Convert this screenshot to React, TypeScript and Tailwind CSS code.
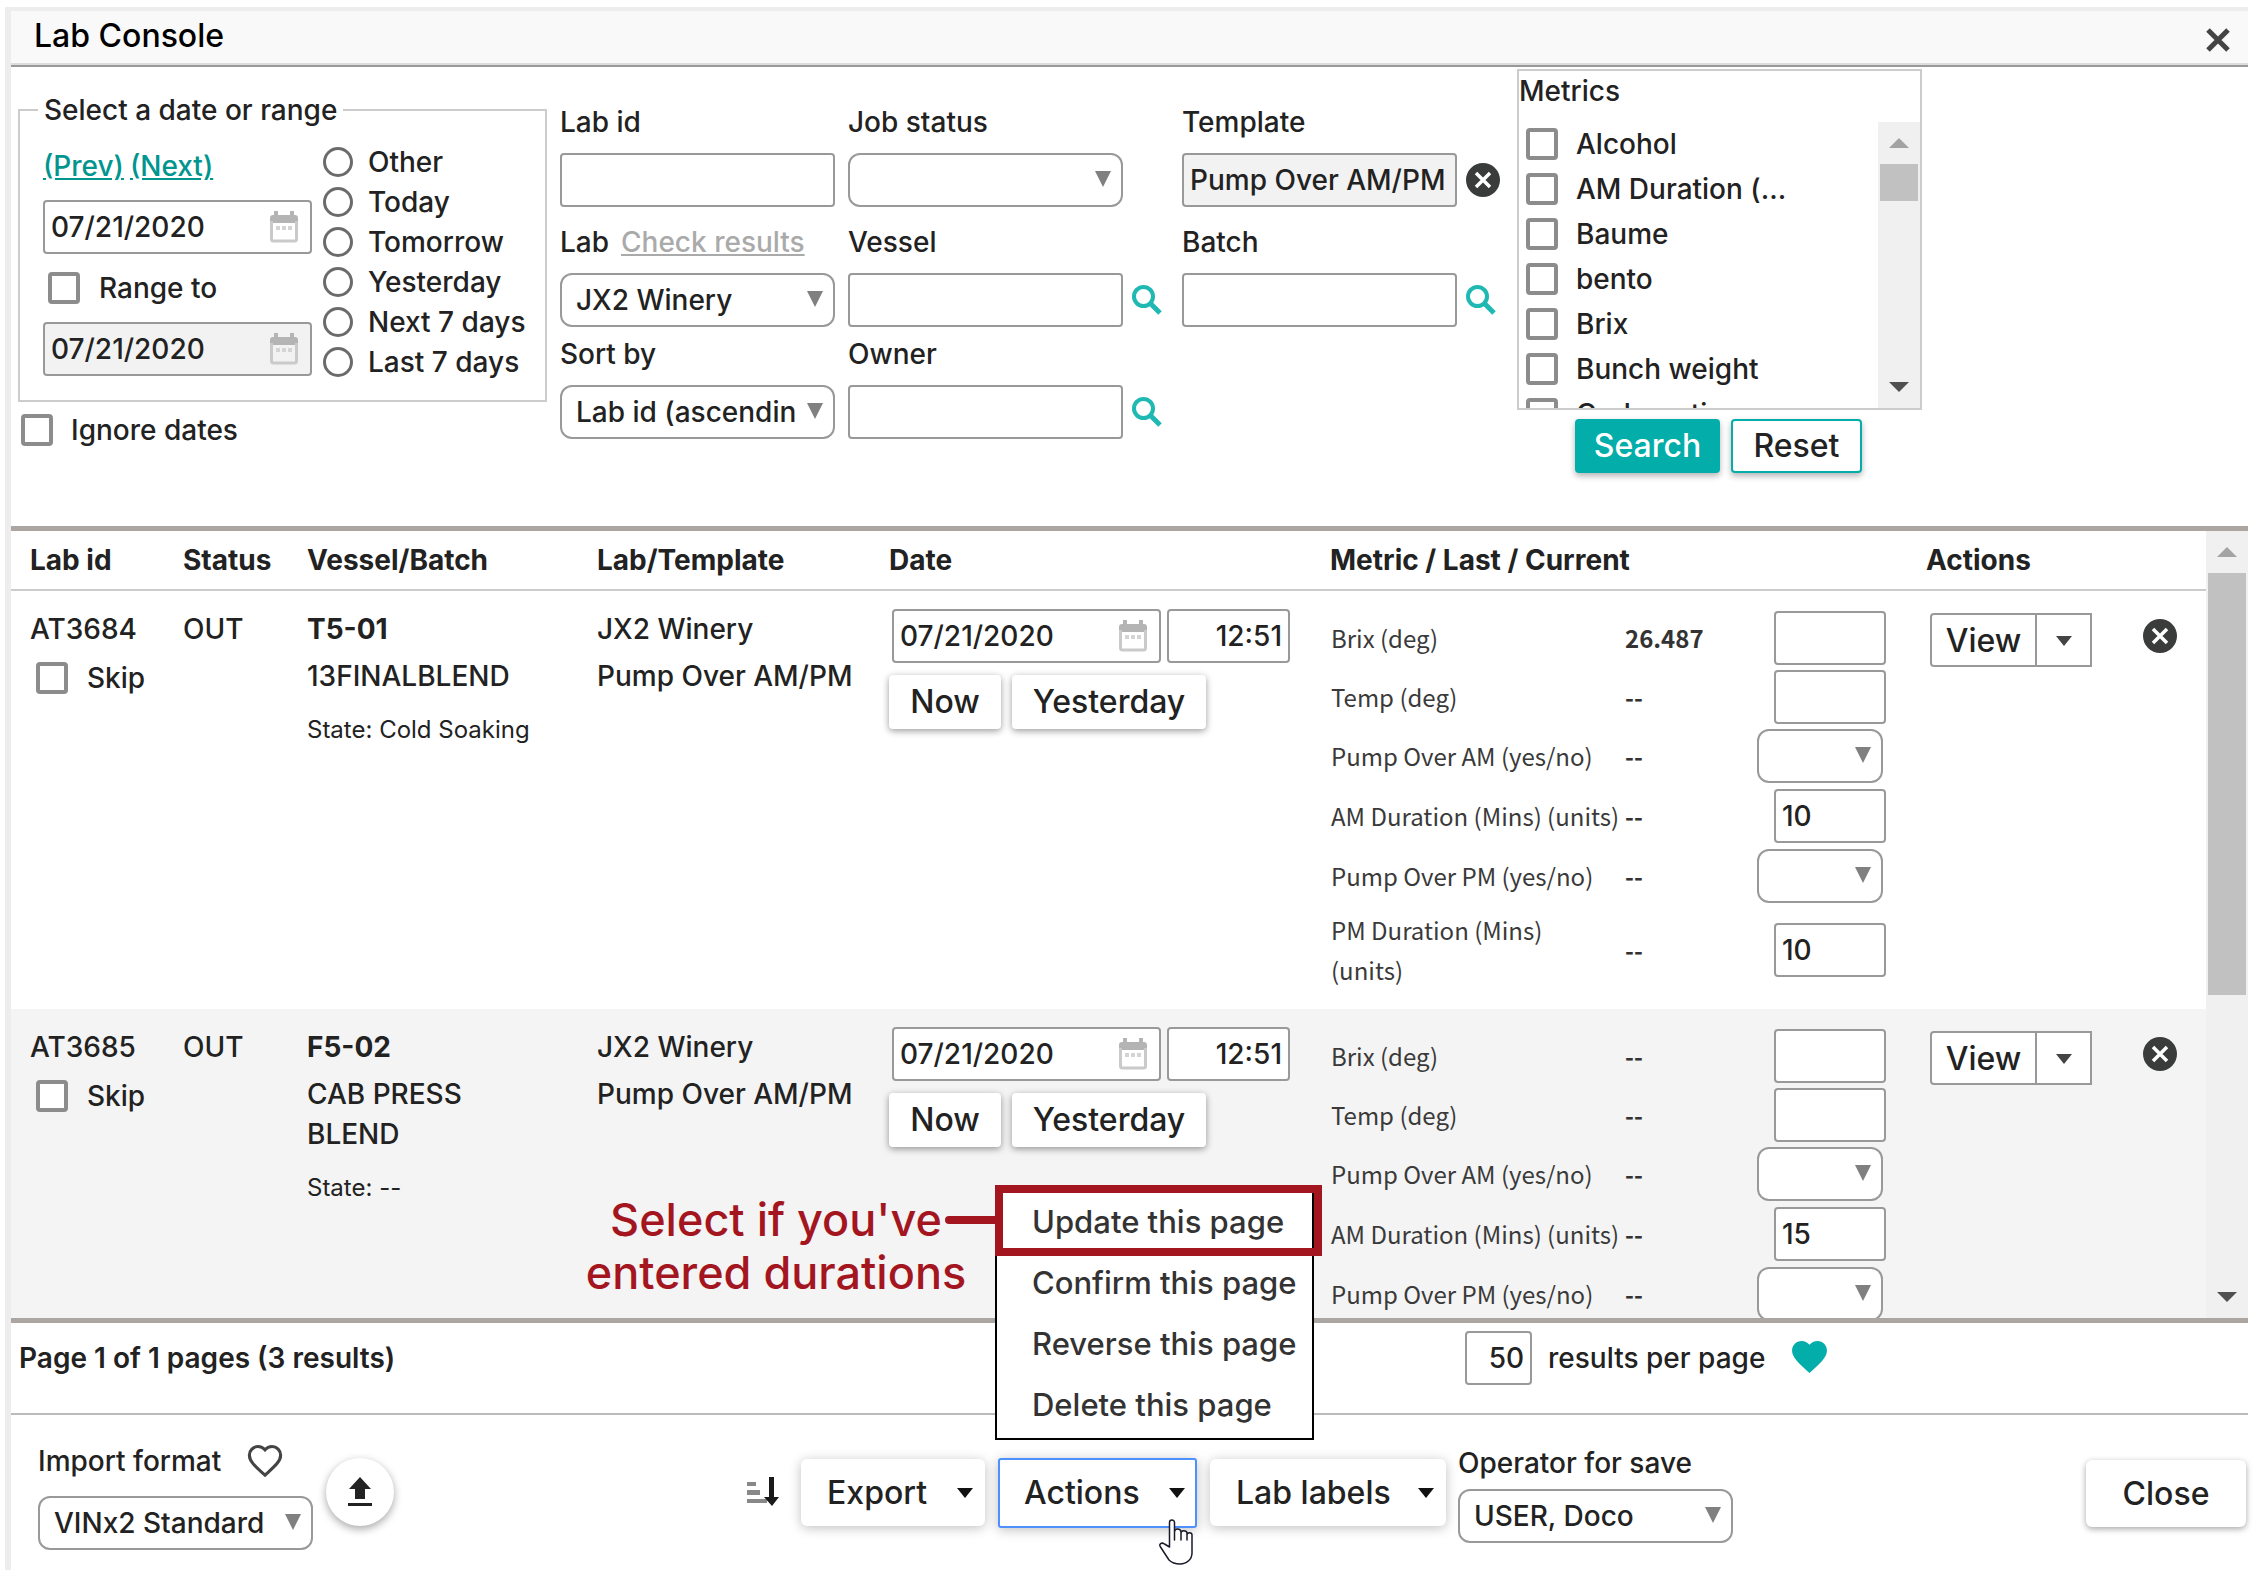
import React from 'react';
import clsx from 'clsx';

type Metric = {
  name: string;
  last: string;
  kind: 'text' | 'select';
  value?: string;
  size: string;
};

type Job = {
  id: string;
  status: string;
  vessel: string;
  batch: string;
  state: string;
  lab: string;
  template: string;
  date: string;
  time: string;
  metrics: Metric[];
};

const JOBS: Job[] = [
  {
    id: 'AT3684',
    status: 'OUT',
    vessel: 'T5-01',
    batch: '13FINALBLEND',
    state: 'Cold Soaking',
    lab: 'JX2 Winery',
    template: 'Pump Over AM/PM',
    date: '07/21/2020',
    time: '12:51',
    metrics: [
      { name: 'Brix (deg)', last: '26.487', kind: 'text', size: 'h-[58px]' },
      { name: 'Temp (deg)', last: '--', kind: 'text', size: 'h-[59px]' },
      { name: 'Pump Over AM (yes/no)', last: '--', kind: 'select', size: 'h-[60px]' },
      { name: 'AM Duration (Mins) (units)', last: '--', kind: 'text', value: '10', size: 'h-[60px]' },
      { name: 'Pump Over PM (yes/no)', last: '--', kind: 'select', size: 'h-[60px]' },
      { name: 'PM Duration (Mins)\n(units)', last: '--', kind: 'text', value: '10', size: 'h-[87px]' },
    ],
  },
  {
    id: 'AT3685',
    status: 'OUT',
    vessel: 'F5-02',
    batch: 'CAB PRESS\nBLEND',
    state: '--',
    lab: 'JX2 Winery',
    template: 'Pump Over AM/PM',
    date: '07/21/2020',
    time: '12:51',
    metrics: [
      { name: 'Brix (deg)', last: '--', kind: 'text', size: 'h-[58px]' },
      { name: 'Temp (deg)', last: '--', kind: 'text', size: 'h-[59px]' },
      { name: 'Pump Over AM (yes/no)', last: '--', kind: 'select', size: 'h-[60px]' },
      { name: 'AM Duration (Mins) (units)', last: '--', kind: 'text', value: '15', size: 'h-[60px]' },
      { name: 'Pump Over PM (yes/no)', last: '--', kind: 'select', size: 'h-[60px]' },
    ],
  },
];

const RANGES = ['Other', 'Today', 'Tomorrow', 'Yesterday', 'Next 7 days', 'Last 7 days'];
const METRICS = ['Alcohol', 'AM Duration (...', 'Baume', 'bento', 'Brix', 'Bunch weight', 'Carbonation'];
const MENU = ['Update this page', 'Confirm this page', 'Reverse this page', 'Delete this page'];

const HEART =
  'M12 21.35l-1.45-1.32C5.4 15.36 2 12.28 2 8.5 2 5.42 4.42 3 7.5 3c1.74 0 3.41.81 4.5 2.09C13.09 3.81 14.76 3 16.5 3 19.58 3 22 5.42 22 8.5c0 3.78-3.4 6.86-8.55 11.54L12 21.35z';

const inputClass = 'h-[54px] rounded border-2 border-[#999] bg-white px-[6px] text-[28px] text-[#222]';

/* ---------- icons ---------- */

const CalendarIcon = () => (
  <svg viewBox="0 0 28 32" className="h-8 w-7">
    <path fill="#b4b4b4" d="M4 0h4v4h12V0h4v4h1a3 3 0 0 1 3 3v5H0V7a3 3 0 0 1 3-3h1z" />
    <path fill="none" stroke="#cacaca" strokeWidth="3" d="M1.500 10v18a2 2 0 0 0 2 2h21a2 2 0 0 0 2-2V10" />
    <path fill="#d4d4d4" d="M6 15h4v4H6zM12 15h4v4h-4zM18 15h4v4h-4z" />
  </svg>
);

const SearchIcon = () => (
  <svg viewBox="0 0 30 30" className="h-[30px] w-[30px]" fill="none" stroke="#1fb8b3">
    <circle cx="11.500" cy="11.500" r="9.500" strokeWidth="4" />
    <path d="M18 18l10 10" strokeWidth="5" />
  </svg>
);

const ClearIcon = () => (
  <svg viewBox="0 0 34 34" className="h-[34px] w-[34px]">
    <circle cx="17" cy="17" r="17" fill="#3a3c3b" />
    <path d="M10 10l14 14M24 10l-14 14" stroke="#fff" strokeWidth="3.500" />
  </svg>
);

const Caret = ({ color }: { color: string }) => (
  <svg viewBox="0 0 16 10" className="h-[10px] w-4">
    <path d="M0 0h16L8 10z" fill={color} />
  </svg>
);

/* ---------- form parts ---------- */

const Check = ({ label, gap }: { label: string; gap: string }) => (
  <label className={clsx('flex h-10 items-center', gap)}>
    <input type="checkbox" className="size-8 shrink-0 appearance-none rounded border-4 border-[#8c8c8c] bg-white" />
    <span>{label}</span>
  </label>
);

const Select = ({ id, label, value, width }: { id?: string; label?: string; value?: string; width: string }) => (
  <div className={clsx('relative', width)}>
    <select
      id={id}
      aria-label={label}
      className="h-[54px] w-full appearance-none rounded-xl border-2 border-[#999] bg-white pr-[36px] pl-[14px] text-[28px] text-[#222]"
    >
      <option>{value}</option>
    </select>
    <svg viewBox="0 0 16 16" className="pointer-events-none absolute top-[18px] right-[12px] size-4">
      <path d="M0 0h16L8 16z" fill="#808080" />
    </svg>
  </div>
);

const DateInput = ({ label, value, disabled }: { label: string; value: string; disabled?: boolean }) => (
  <div
    className={clsx(
      'flex h-[54px] w-[269px] items-center justify-between rounded border-2 border-[#999] pr-3 pl-[6px]',
      disabled ? 'bg-[#f2f2f2]' : 'bg-white',
    )}
  >
    <input
      aria-label={label}
      defaultValue={value}
      disabled={disabled}
      className="w-[200px] bg-transparent text-[28px] text-[#222]"
    />
    <CalendarIcon />
  </div>
);

const Field = ({
  id,
  label,
  extra,
  children,
}: {
  id: string;
  label: string;
  extra?: React.ReactNode;
  children: React.ReactNode;
}) => (
  <div>
    <div className="mb-[11px] flex h-10 items-center gap-3">
      <label htmlFor={id}>{label}</label>
      {extra}
    </div>
    <div className="flex items-center gap-[9px]">{children}</div>
  </div>
);

const ScrollBar = ({ thumb }: { thumb: string }) => (
  <div className="flex w-[42px] shrink-0 flex-col items-center bg-[#f0f0f0]">
    <div className="flex h-[42px] items-center">
      <svg viewBox="0 0 20 10" className="h-[10px] w-5">
        <path d="M0 10h20L10 0z" fill="#a3a3a3" />
      </svg>
    </div>
    <div className={clsx('w-[38px] bg-[#c1c1c1]', thumb)} />
    <div className="mt-auto flex h-[42px] items-center">
      <svg viewBox="0 0 20 10" className="h-[10px] w-5">
        <path d="M0 0h20L10 10z" fill="#505050" />
      </svg>
    </div>
  </div>
);

/* ---------- sections ---------- */

const Filters: React.FC = () => (
  <section className="flex h-[459px] items-start pl-[7px] font-medium">
    <div className="mt-[23px] w-[529px]">
      <fieldset className="border-2 border-[#ccc] px-[18px] pb-[18px]">
        <legend className="h-10 px-[6px]">Select a date or range</legend>
        <div className="flex pt-3">
          <div className="ml-[5px] flex flex-col gap-[14px] pt-1">
            <div className="flex h-10 items-center gap-[6px] text-[#00958f]">
              <a href="#prev" className="underline">(Prev)</a>
              <a href="#next" className="underline">(Next)</a>
            </div>
            <DateInput label="Date from" value="07/21/2020" />
            <div className="pl-[5px]">
              <Check label="Range to" gap="gap-[19px]" />
            </div>
            <DateInput label="Date to" value="07/21/2020" disabled />
          </div>
          <div className="ml-[11px]">
            {RANGES.map(range => (
              <label key={range} className="flex h-10 items-center gap-[15px] whitespace-nowrap">
                <input type="radio" name="range" className="size-[30px] appearance-none rounded-full border-3 border-[#6b6b6b]" />
                <span>{range}</span>
              </label>
            ))}
          </div>
        </div>
      </fieldset>
      <div className="mt-2 pl-[3px]">
        <Check label="Ignore dates" gap="gap-[18px]" />
      </div>
    </div>

    <div className="mt-[35px] ml-[13px] w-[275px]">
      <Field id="labId" label="Lab id">
        <input id="labId" className={clsx(inputClass, 'w-[275px]')} />
      </Field>
      <div className="mt-[15px]">
        <Field
          id="lab"
          label="Lab"
          extra={<a href="#results" className="text-[#aaa] underline">Check results</a>}
        >
          <Select id="lab" value="JX2 Winery" width="w-[275px]" />
        </Field>
      </div>
      <div className="mt-[7px]">
        <Field id="sort" label="Sort by">
          <Select id="sort" value="Lab id (ascending)" width="w-[275px]" />
        </Field>
      </div>
    </div>

    <div className="mt-[35px] ml-[13px] w-[321px]">
      <Field id="jobStatus" label="Job status">
        <Select id="jobStatus" width="w-[275px]" />
      </Field>
      <div className="mt-[15px]">
        <Field id="vessel" label="Vessel">
          <input id="vessel" className={clsx(inputClass, 'w-[275px]')} />
          <button aria-label="Find vessel"><SearchIcon /></button>
        </Field>
      </div>
      <div className="mt-[7px]">
        <Field id="owner" label="Owner">
          <input id="owner" className={clsx(inputClass, 'w-[275px]')} />
          <button aria-label="Find owner"><SearchIcon /></button>
        </Field>
      </div>
    </div>

    <div className="mt-[35px] ml-[13px] w-[322px]">
      <Field id="template" label="Template">
        <input
          id="template"
          defaultValue="Pump Over AM/PM"
          className="h-[54px] w-[275px] rounded border-2 border-[#999] bg-[#f2f2f2] px-[6px] text-[28px] text-[#222]"
        />
        <button aria-label="Clear template"><ClearIcon /></button>
      </Field>
      <div className="mt-[15px]">
        <Field id="batch" label="Batch">
          <input id="batch" className={clsx(inputClass, 'w-[275px]')} />
          <button aria-label="Find batch"><SearchIcon /></button>
        </Field>
      </div>
    </div>

    <div className="mt-[2px] ml-[13px] w-[405px]">
      <div className="border-2 border-[#ccc]">
        <div className="flex h-[51px] items-center pb-3">Metrics</div>
        <div className="flex h-[286px]">
          <div className="flex-1 overflow-hidden pt-[2px] pl-[7px]">
            {METRICS.map(metric => (
              <div key={metric} className="h-[45px]">
                <Check label={metric} gap="gap-[18px]" />
              </div>
            ))}
          </div>
          <ScrollBar thumb="h-[37px]" />
        </div>
      </div>
      <div className="mt-[9px] ml-[58px] flex gap-[11px]">
        <button className="h-[54px] w-[145px] rounded bg-[#03ada9] text-[32px] text-white shadow-[0_3px_6px_rgba(0,0,0,0.3)]">
          Search
        </button>
        <button className="h-[54px] w-[131px] rounded border-2 border-[#03ada9] bg-white text-[32px] shadow-[0_3px_6px_rgba(0,0,0,0.3)]">
          Reset
        </button>
      </div>
    </div>
  </section>
);

const MetricRow = ({ metric, id }: { metric: Metric; id: string }) => (
  <div
    className={clsx(
      "grid grid-cols-[295px_132px_130px] items-center font-['Noto_Sans_CJK_JP',sans-serif] text-2xl leading-10 font-normal",
      metric.size,
    )}
  >
    <label htmlFor={id} className="pl-px whitespace-pre text-[#3a3a3a]">{metric.name}</label>
    <span className="font-bold text-[#333]">{metric.last}</span>
    <div className="font-['Inter',sans-serif] font-medium">
      {metric.kind === 'select' ? (
        <Select id={id} width="w-[126px]" />
      ) : (
        <input id={id} defaultValue={metric.value} className={clsx(inputClass, 'ml-[17px] w-[112px]')} />
      )}
    </div>
  </div>
);

const JobRow = ({ job }: { job: Job }) => (
  <tr className="align-top even:bg-[#f4f4f4]">
    <td className="pt-[18px] pb-4 pl-[19px]">
      <div>{job.id}</div>
      <div className="mt-[9px] ml-[6px]">
        <Check label="Skip" gap="gap-[19px]" />
      </div>
    </td>
    <td className="pt-[18px]">{job.status}</td>
    <td className="pt-[18px]">
      <div className="font-bold">{job.vessel}</div>
      <div className="mt-[7px] whitespace-pre-line">{job.batch}</div>
      <div className="mt-[14px] text-2xl leading-10 font-normal">State: {job.state}</div>
    </td>
    <td className="pt-[18px]">
      <div>{job.lab}</div>
      <div className="mt-[7px]">{job.template}</div>
    </td>
    <td className="pt-[18px]">
      <div className="flex gap-[6px] pl-[3px]">
        <DateInput label={`${job.id} date`} value={job.date} />
        <input aria-label={`${job.id} time`} defaultValue={job.time} className={clsx(inputClass, 'w-[123px] text-right')} />
      </div>
      <div className="mt-3 flex gap-[11px]">
        <button className="h-[54px] w-[112px] rounded bg-white text-[32px] shadow-[0_2px_7px_rgba(0,0,0,0.4)]">Now</button>
        <button className="h-[54px] w-[194px] rounded bg-white text-[32px] shadow-[0_2px_7px_rgba(0,0,0,0.4)]">Yesterday</button>
      </div>
    </td>
    <td className="pt-[18px] pb-4">
      {job.metrics.map((metric, i) => (
        <MetricRow key={metric.name} metric={metric} id={`${job.id}-${i}`} />
      ))}
    </td>
    <td className="pt-[22px] pl-1">
      <div className="flex items-start">
        <div className="flex h-[54px] rounded-l border-2 border-[#999] bg-white">
          <button className="w-[105px] border-r-2 border-[#999] pt-[2px] text-[32px]">View</button>
          <button aria-label="More actions" className="flex w-[53px] items-center justify-center pt-[2px]">
            <Caret color="#444" />
          </button>
        </div>
        <button aria-label="Remove row" className="mt-[6px] ml-[51px]"><ClearIcon /></button>
      </div>
    </td>
  </tr>
);

const ResultsTable: React.FC = () => (
  <section className="flex h-[797px] border-y-5 border-[#aba6a2]">
    <div className="flex-1 overflow-hidden">
      <table className="w-full table-fixed border-collapse font-medium">
        <thead>
          <tr className="h-[59px] border-b-2 border-[#ccc] text-left">
            <th className="w-[172px] pl-[19px] font-bold">Lab id</th>
            <th className="w-[124px] font-bold">Status</th>
            <th className="w-[290px] font-bold">Vessel/Batch</th>
            <th className="w-[292px] font-bold">Lab/Template</th>
            <th className="w-[441px] font-bold">Date</th>
            <th className="w-[596px] font-bold">Metric / Last / Current</th>
            <th className="font-bold">Actions</th>
          </tr>
        </thead>
        <tbody>
          {JOBS.map(job => (
            <JobRow key={job.id} job={job} />
          ))}
        </tbody>
      </table>
    </div>
    <ScrollBar thumb="h-[422px]" />
  </section>
);

const Callout: React.FC = () => (
  <>
    {/* red frame on the first menu entry, with its note and connector */}
    <div className="pointer-events-none absolute -top-[2px] -left-[2px] h-[71px] w-[327px] border-8 border-[#a4161f]" />
    <div className="pointer-events-none absolute top-[29px] -left-[52px] h-2 w-[54px] rounded-l-full bg-[#a4161f]" />
    <p className="pointer-events-none absolute top-[6px] right-[336px] w-[400px] text-center text-[45px] leading-[53px] font-medium whitespace-nowrap text-[#a4161f]">
      Select if you've
      <br />
      entered durations
    </p>
  </>
);

const ActionsMenu: React.FC = () => (
  <div className="absolute bottom-[88px] -left-[3px] z-10 w-[319px] border-2 border-black bg-white pt-1 pb-[3px]">
    <ul>
      {MENU.map(item => (
        <li key={item}>
          <button className="h-[61px] w-full pl-[35px] text-left text-[31px] whitespace-nowrap text-[#333]">{item}</button>
        </li>
      ))}
    </ul>
    <Callout />
  </div>
);

const HandCursor = () => (
  <svg
    viewBox="0 0 34 46"
    className="pointer-events-none absolute top-[61px] left-[161px] h-[46px] w-[34px]"
    fill="#fff"
    stroke="#1a1a2a"
    strokeWidth="1.500"
    strokeLinejoin="round"
  >
    <path d="M10.500 28V3.500a2.500 2.500 0 0 1 5 0V21v-8c0-4 6-4 6.500 0v8v-7c0-3 5.500-3 6 0v7v-5c0-3 5-3 5 0v18c0 6-5 11-12 11-5 0-8-1-11-4L1.500 28c-2-3 1-5 4-3z" />
  </svg>
);

const Footer: React.FC = () => (
  <footer className="flex h-[155px] items-start justify-between pr-[2px] pl-[27px] font-medium">
    <div className="flex">
      <div className="mt-[26px]">
        <div className="mb-[15px] flex h-10 items-center gap-[26px]">
          <label htmlFor="importFormat">Import format</label>
          <svg viewBox="1 2 22 20.500" className="h-8 w-[36px]" fill="none" stroke="#444" strokeWidth="2">
            <path d={HEART} />
          </svg>
        </div>
        <Select id="importFormat" value="VINx2 Standard" width="w-[275px]" />
      </div>
      <button
        aria-label="Upload"
        className="mt-[43px] ml-[13px] flex size-[68px] items-center justify-center rounded-full bg-white shadow-[0_3px_8px_rgba(0,0,0,0.35)]"
      >
        <svg viewBox="0 0 24 30" className="h-[30px] w-6" fill="#222">
          <path d="M12 0l11 12h-6v10H7V12H1zM0 26h24v3H0z" />
        </svg>
      </button>
    </div>

    <div className="flex items-start">
      <button aria-label="Sort order" className="mt-[62px]">
        <svg viewBox="0 0 32 30" className="h-[30px] w-8">
          <path fill="#888" d="M0 5h9v4H0zM0 13h13v5H0zM0 22h20v4H0z" />
          <path fill="#1a1a1a" d="M22 0h5v20h5l-7 9-8-9h5z" />
        </svg>
      </button>
      <button className="mt-[44px] ml-[22px] flex h-[67px] w-[184px] items-center justify-between rounded-md bg-white pr-3 pl-[26px] text-[32px] shadow-[0_2px_12px_rgba(0,0,0,0.25)]">
        Export <Caret color="#111" />
      </button>
      <div className="relative mt-[43px] ml-[13px]">
        <button className="flex h-[70px] w-[199px] items-center justify-between rounded-[3px] border-2 border-[#4d90fe] bg-white pr-[10px] pl-6 text-[32px] shadow-[0_2px_12px_rgba(0,0,0,0.25)]">
          Actions <Caret color="#111" />
        </button>
        <ActionsMenu />
        <HandCursor />
      </div>
      <button className="mt-[44px] ml-[13px] flex h-[67px] w-[236px] items-center justify-between rounded-md bg-white pr-3 pl-[26px] text-[32px] whitespace-nowrap shadow-[0_2px_12px_rgba(0,0,0,0.25)]">
        Lab labels <Caret color="#111" />
      </button>
      <div className="mt-[28px] ml-3">
        <label htmlFor="operator" className="mb-[6px] flex h-10 items-center">Operator for save</label>
        <Select id="operator" value="USER, Doco" width="w-[275px]" />
      </div>
    </div>

    <button className="mt-[45px] h-[67px] w-[160px] rounded-md bg-white text-[32px] shadow-[0_2px_6px_rgba(0,0,0,0.35)]">
      Close
    </button>
  </footer>
);

const App: React.FC = () => (
  <div className="min-h-screen bg-white pt-[7px] pr-2 pl-[5px] font-['Inter',sans-serif] text-[28px] leading-10 text-[#222]">
    <main className="border-t-4 border-l-6 border-[#ededed]">
      <header className="flex h-14 items-center justify-between border-b-2 border-[#999] bg-[#f9f9f9] pr-[18px] pl-[23px] shadow-[inset_0_-2px_0_#ddd]">
        <h1 className="pb-1 text-[32px] font-medium text-black">Lab Console</h1>
        <button aria-label="Close window" className="pt-1">
          <svg viewBox="0 0 24 24" className="size-6" stroke="#444" strokeWidth="5">
            <path d="M2 2l20 20M22 2L2 22" />
          </svg>
        </button>
      </header>
      <Filters />
      <ResultsTable />
      <div className="flex h-[92px] items-start border-b-2 border-[#bbb] pt-2 font-semibold">
        <div className="flex h-[54px] w-[65%] items-center pl-2">Page 1 of 1 pages (3 results)</div>
        <label className="flex items-center gap-4 font-medium">
          <input defaultValue="50" className={clsx(inputClass, 'w-[67px] text-right')} />
          results per page
        </label>
        <svg viewBox="2 3 20 18.350" className="mt-[10px] ml-[27px] h-8 w-[35px]" fill="#03ada9">
          <path d={HEART} />
        </svg>
      </div>
      <Footer />
    </main>
  </div>
);

export default App;
